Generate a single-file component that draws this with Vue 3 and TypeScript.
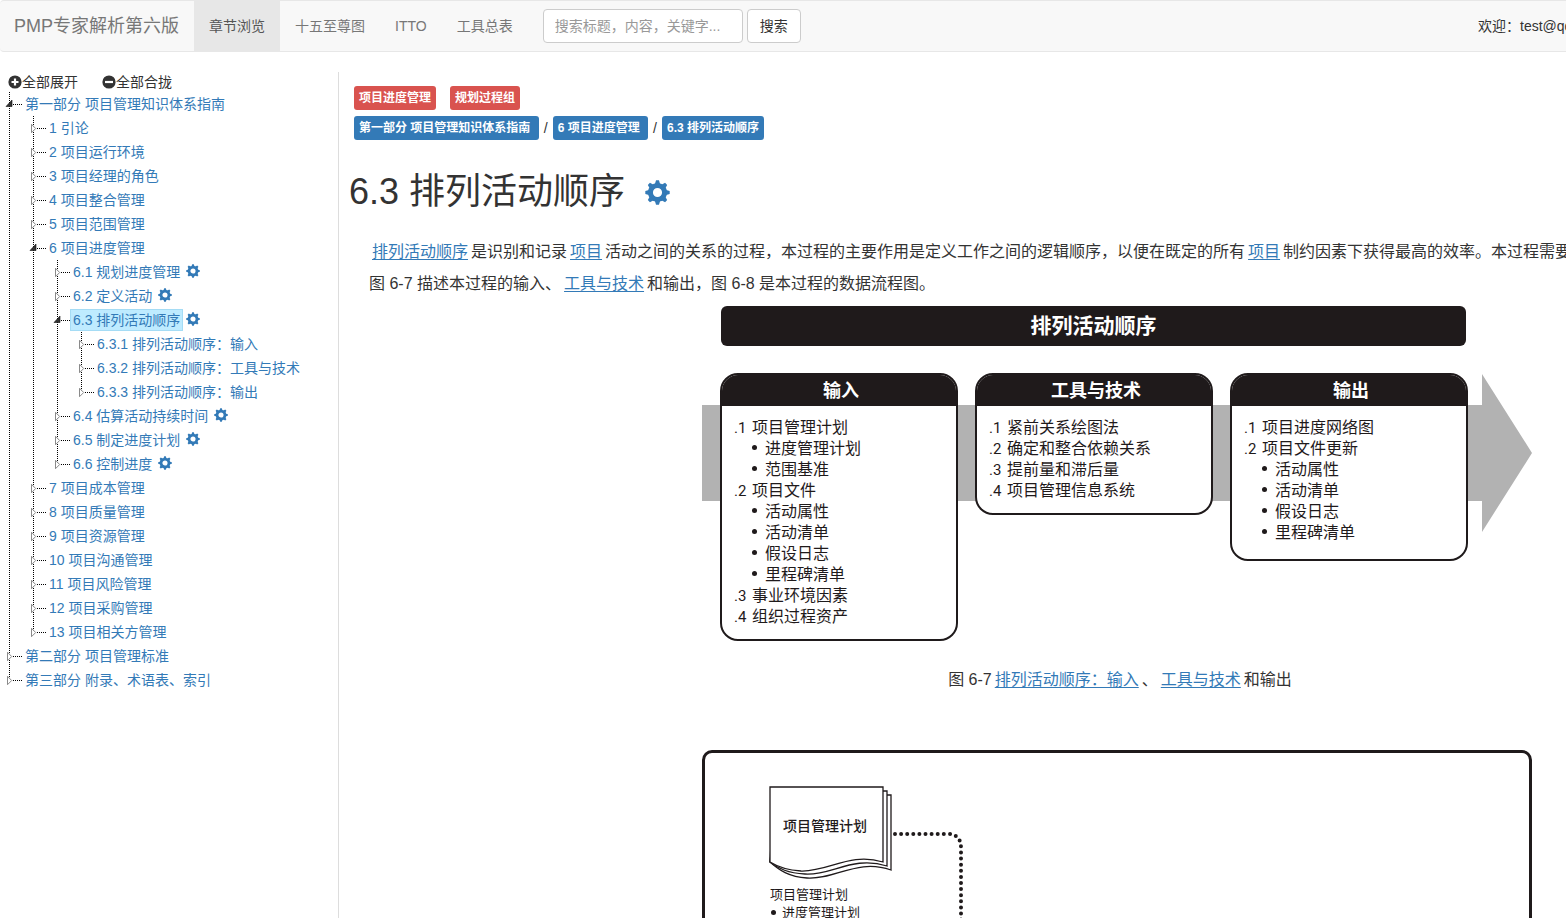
<script setup lang="ts">
import { defineComponent, h, ref, type PropType, type VNode } from 'vue'

interface TreeItem {
  title: string
  open?: boolean
  gear?: boolean
  children?: TreeItem[]
}

interface CardRow {
  no?: string
  text: string
}

interface Card {
  title: string
  tall?: boolean
  rows: CardRow[]
}

const GearIcon = defineComponent({
  setup() {
    return () =>
      h('svg', { class: 'gear', viewBox: '0 0 24 24', 'aria-hidden': 'true' }, [
        h('circle', { cx: 12, cy: 12, r: 6.8, fill: 'none', stroke: 'currentColor', 'stroke-width': 4.8 }),
        ...[0, 45, 90, 135, 180, 225, 270, 315].map((a) =>
          h('path', { d: 'M10.6 0.3h2.8l1.3 4.3h-5.4z', fill: 'currentColor', transform: `rotate(${a} 12 12)` })
        )
      ])
  }
})

const selected = ref('6.3 排列活动顺序')
const keyword = ref('')

const tree = ref<TreeItem[]>([
  {
    title: '第一部分 项目管理知识体系指南',
    open: true,
    children: [
      { title: '1 引论' },
      { title: '2 项目运行环境' },
      { title: '3 项目经理的角色' },
      { title: '4 项目整合管理' },
      { title: '5 项目范围管理' },
      {
        title: '6 项目进度管理',
        open: true,
        children: [
          { title: '6.1 规划进度管理', gear: true },
          { title: '6.2 定义活动', gear: true },
          {
            title: '6.3 排列活动顺序',
            gear: true,
            open: true,
            children: [
              { title: '6.3.1 排列活动顺序：输入' },
              { title: '6.3.2 排列活动顺序：工具与技术' },
              { title: '6.3.3 排列活动顺序：输出' }
            ]
          },
          { title: '6.4 估算活动持续时间', gear: true },
          { title: '6.5 制定进度计划', gear: true },
          { title: '6.6 控制进度', gear: true }
        ]
      },
      { title: '7 项目成本管理' },
      { title: '8 项目质量管理' },
      { title: '9 项目资源管理' },
      { title: '10 项目沟通管理' },
      { title: '11 项目风险管理' },
      { title: '12 项目采购管理' },
      { title: '13 项目相关方管理' }
    ]
  },
  { title: '第二部分 项目管理标准' },
  { title: '第三部分 附录、术语表、索引' }
])

function setAll(items: TreeItem[], open: boolean) {
  for (const item of items) {
    if (item.children) {
      item.open = open
      setAll(item.children, open)
    }
  }
}

const TreeList = defineComponent({
  props: { items: { type: Array as PropType<TreeItem[]>, required: true } },
  setup(props) {
    const render = (items: TreeItem[]): VNode =>
      h(
        'ul',
        { class: 'tree' },
        items.map((item) =>
          h('li', { key: item.title }, [
            h('div', { class: 'tree-row' }, [
              h(
                'button',
                {
                  type: 'button',
                  class: 'switch',
                  'aria-label': (item.open ? '收起 ' : '展开 ') + item.title,
                  onClick: () => (item.open = !item.open)
                },
                [
                  h('svg', { viewBox: '0 0 24 24', 'aria-hidden': 'true' }, [
                    item.open
                      ? h('path', { d: 'M12 8v6.5H6z', fill: '#333', stroke: '#111', 'stroke-width': 0.6 })
                      : h('path', { d: 'M7.5 8.3v8.4l4.2-4.2z', fill: '#fff', stroke: '#8a8a8a' }),
                    h('path', { d: 'M13 12.5h9', stroke: '#000', 'stroke-dasharray': '1 1' })
                  ])
                ]
              ),
              h(
                'a',
                {
                  href: '#',
                  class: ['node', { current: item.title === selected.value }],
                  onClick: (e: Event) => {
                    e.preventDefault()
                    selected.value = item.title
                  }
                },
                item.title
              ),
              item.gear ? h(GearIcon) : null
            ]),
            item.open && item.children ? render(item.children) : null
          ])
        )
      )
    return () => render(props.items)
  }
})

const cards: Card[] = [
  {
    title: '输入',
    rows: [
      { no: '.1', text: '项目管理计划' },
      { text: '进度管理计划' },
      { text: '范围基准' },
      { no: '.2', text: '项目文件' },
      { text: '活动属性' },
      { text: '活动清单' },
      { text: '假设日志' },
      { text: '里程碑清单' },
      { no: '.3', text: '事业环境因素' },
      { no: '.4', text: '组织过程资产' }
    ]
  },
  {
    title: '工具与技术',
    rows: [
      { no: '.1', text: '紧前关系绘图法' },
      { no: '.2', text: '确定和整合依赖关系' },
      { no: '.3', text: '提前量和滞后量' },
      { no: '.4', text: '项目管理信息系统' }
    ]
  },
  {
    title: '输出',
    tall: true,
    rows: [
      { no: '.1', text: '项目进度网络图' },
      { no: '.2', text: '项目文件更新' },
      { text: '活动属性' },
      { text: '活动清单' },
      { text: '假设日志' },
      { text: '里程碑清单' }
    ]
  }
]
</script>

<template>
  <div class="page">
    <header class="navbar">
      <a class="brand" href="#">PMP专家解析第六版</a>
      <nav class="menu">
        <a class="active" href="#">章节浏览</a>
        <a href="#">十五至尊图</a>
        <a href="#">ITTO</a>
        <a href="#">工具总表</a>
      </nav>
      <form class="search" @submit.prevent>
        <input v-model="keyword" type="text" aria-label="搜索" placeholder="搜索标题，内容，关键字..." />
        <button type="submit">搜索</button>
      </form>
      <span class="user">欢迎：test@qq.com</span>
    </header>

    <div class="body">
      <aside class="sidebar">
        <div class="tools">
          <button type="button" @click="setAll(tree, true)">
            <svg viewBox="0 0 14 14" aria-hidden="true">
              <circle cx="7" cy="7" r="6.6" fill="#333" />
              <path d="M7 3.5v7M3.5 7h7" stroke="#fff" stroke-width="2.2" />
            </svg>全部展开
          </button>
          <button type="button" @click="setAll(tree, false)">
            <svg viewBox="0 0 14 14" aria-hidden="true">
              <circle cx="7" cy="7" r="6.6" fill="#333" />
              <path d="M3 7h8" stroke="#fff" stroke-width="2.2" />
            </svg>全部合拢
          </button>
        </div>
        <TreeList :items="tree" />
      </aside>

      <main class="content">
        <div class="labels tags">
          <a class="label danger" href="#">项目进度管理</a>
          <a class="label danger" href="#">规划过程组</a>
        </div>
        <div class="labels">
          <a class="label primary" href="#">第一部分 项目管理知识体系指南&nbsp;</a>
          <span class="slash">/</span>
          <a class="label primary" href="#">6 项目进度管理&nbsp;</a>
          <span class="slash">/</span>
          <a class="label primary" href="#">6.3 排列活动顺序</a>
        </div>

        <h1>6.3 排列活动顺序 <GearIcon /></h1>

        <p class="text"><a href="#">排列活动顺序</a>是识别和记录<a href="#">项目</a>活动之间的关系的过程，本过程的主要作用是定义工作之间的逻辑顺序，以便在既定的所有<a href="#">项目</a>制约因素下获得最高的效率。本过程需要在整个项目期间开展。</p>
        <p class="text">图 6-7 描述本过程的输入、<a href="#">工具与技术</a>和输出，图 6-8 是本过程的数据流程图。</p>

        <figure>
          <div class="diagram">
            <div class="banner">排列活动顺序</div>
            <div class="process">
              <svg class="arrow" viewBox="0 0 830 160" aria-hidden="true">
                <path d="M0 32H780V1L830 80L780 159V128H0z" fill="#b2b2b2" />
              </svg>
              <section v-for="card in cards" :key="card.title" class="card" :class="{ tall: card.tall }">
                <h2>{{ card.title }}</h2>
                <ul>
                  <li v-for="row in card.rows" :key="row.text" :class="{ sub: !row.no }">
                    <span v-if="row.no" class="no">{{ row.no }}</span>
                    <span v-else class="dot"></span>
                    {{ row.text }}
                  </li>
                </ul>
              </section>
            </div>
          </div>
          <figcaption class="caption">图 6-7<a href="#">排列活动顺序：输入</a>、<a href="#">工具与技术</a>和输出</figcaption>
        </figure>

        <figure class="chart">
          <div class="flow">
            <div class="source">
              <svg class="sheet" viewBox="0 0 124 94" role="img" aria-label="项目管理计划">
                <g fill="#fff" stroke="#1f1a1b" stroke-width="1.3">
                  <path d="M9 9H122V84C88 72 66 94 38 92C20 91 10 84 1 76z" />
                  <path d="M5 5H118V80C84 69 62 90 36 88C19 87 10 83 1 76z" />
                  <path d="M1 1H114V76C80 66 60 86 32 85C17 84 9 81 1 76z" />
                </g>
                <text x="56" y="45" text-anchor="middle">项目管理计划</text>
              </svg>
              <div class="listing">
                <div>项目管理计划</div>
                <ul>
                  <li><span class="dot"></span>进度管理计划</li>
                </ul>
              </div>
            </div>
            <svg class="link-line" viewBox="0 0 80 400" aria-hidden="true">
              <path d="M3 3H56Q69 3 69 17V400" fill="none" stroke="#1f1a1b" stroke-width="4" stroke-linecap="round" stroke-dasharray="0 6.1" />
            </svg>
          </div>
        </figure>
      </main>
    </div>
  </div>
</template>

<style>
html,
body {
  margin: 0;
  background: #fff;
}

.gear {
  width: 14px;
  height: 14px;
  flex: none;
  color: #337ab7;
}

.tree {
  list-style: none;
  margin: 0;
  padding: 0;
}

.tree .tree {
  padding-left: 24px;
}

.tree li {
  background: repeating-linear-gradient(#000 0 1px, transparent 1px 2px) 9px 0 / 1px 100% no-repeat;
}

.tree li:last-child {
  background-size: 1px 12px;
}

.tree-row {
  display: flex;
  align-items: center;
  height: 24px;
  white-space: nowrap;
}

.tree-row .switch {
  flex: none;
  width: 22px;
  height: 24px;
  padding: 0;
  border: 0;
  background: none;
  overflow: hidden;
}

.tree-row .switch svg {
  display: block;
  width: 24px;
  height: 24px;
}

.tree-row .node {
  padding: 0 2px;
  border: 1px solid transparent;
  line-height: 20px;
  color: #337ab7;
  text-decoration: none;
}

.tree-row .node.current {
  background: #beebff;
  border-color: #a5dcf5;
}

.tree-row .gear {
  margin: 0 0 2px 3px;
}
</style>

<style scoped>
.page {
  height: 100vh;
  overflow: hidden;
  font-family: "Liberation Sans", "Noto Sans CJK SC", sans-serif;
  font-size: 14px;
  line-height: 20px;
  color: #333;
}

button,
input {
  font: inherit;
  color: inherit;
}

.navbar {
  display: flex;
  align-items: center;
  height: 50px;
  background: #f8f8f8;
  border: 1px solid #e7e7e7;
  border-width: 1px 0;
  border-radius: 4px 0 0 4px;
  white-space: nowrap;
}

.brand {
  padding: 15px 15px 15px 14px;
  font-size: 18px;
  color: #777;
  text-decoration: none;
}

.menu {
  display: flex;
}

.menu a {
  padding: 15px;
  color: #777;
  text-decoration: none;
}

.menu .active {
  background: #e7e7e7;
  color: #555;
}

.search {
  display: flex;
  gap: 4px;
  padding: 0 15px;
}

.search input {
  box-sizing: border-box;
  width: 200px;
  height: 34px;
  padding: 6px 11px;
  border: 1px solid #ccc;
  border-radius: 4px;
  background: #fff;
}

.search input::placeholder {
  color: #999;
  opacity: 1;
}

.search button {
  height: 34px;
  padding: 6px 12px;
  border: 1px solid #ccc;
  border-radius: 4px;
  background: #fff;
  line-height: 20px;
}

.user {
  flex: none;
  width: 88px;
  margin-left: auto;
  overflow: hidden;
}

.body {
  display: flex;
  min-width: 1901px;
  padding-top: 20px;
}

.sidebar {
  flex: none;
  width: 338px;
  min-height: calc(100vh - 72px);
  border-right: 1px solid #ddd;
}

.tools {
  display: flex;
  gap: 24px;
  padding-left: 8px;
}

.tools button {
  display: flex;
  align-items: center;
  height: 20px;
  padding: 0;
  border: 0;
  background: none;
}

.tools svg {
  width: 14px;
  height: 14px;
}

.content {
  flex: 1;
  padding: 14px 10px 0;
}

.labels {
  display: flex;
  padding-left: 5px;
  line-height: 24px;
}

.tags {
  gap: 14px;
  margin-bottom: 6px;
}

.label {
  padding: 0 5px;
  border-radius: 3px;
  font-size: 12px;
  font-weight: bold;
  color: #fff;
  text-decoration: none;
}

.danger {
  background: #d9534f;
}

.primary {
  background: #337ab7;
}

.slash {
  width: 14px;
  text-align: center;
}

h1 {
  display: flex;
  align-items: center;
  gap: 20px;
  margin: 32px 0 24px;
  font-size: 36px;
  line-height: 40px;
  font-weight: 400;
}

h1 .gear {
  width: 25px;
  height: 25px;
}

.text {
  margin: 0;
  padding-left: 20px;
  font-size: 16px;
  line-height: 32px;
  white-space: nowrap;
}

.text a,
.caption a {
  margin: 0 3px;
  color: #337ab7;
  text-decoration: underline;
  text-underline-offset: 2px;
}

figure {
  margin: 6px 0 0;
}

.diagram {
  width: 830px;
  margin: 0 auto;
  padding-right: 6px;
  font-family: "Noto Sans CJK SC", sans-serif;
  color: #1f1a1b;
}

.banner {
  width: 745px;
  margin-left: 19px;
  padding-bottom: 4px;
  border-radius: 6px;
  background: #1f1a1b;
  color: #fff;
  font-size: 21px;
  font-weight: bold;
  line-height: 36px;
  text-align: center;
}

.process {
  position: relative;
  display: flex;
  align-items: flex-start;
  gap: 17px;
  margin-top: 27px;
  padding-left: 18px;
}

.arrow {
  position: absolute;
  left: 0;
  top: 0;
  width: 830px;
  height: 160px;
}

.card {
  position: relative;
  box-sizing: border-box;
  width: 238px;
  padding-bottom: 13px;
  border: 2px solid #1f1a1b;
  border-radius: 18px;
  background: #fff;
  overflow: hidden;
}

.tall {
  padding-bottom: 17px;
}

.card h2 {
  margin: 0;
  padding: 0 0 2px 4px;
  background: #1f1a1b;
  color: #fff;
  font-size: 18px;
  line-height: 29px;
  text-align: center;
}

.card ul,
.listing ul {
  list-style: none;
  margin: 0;
  padding: 0;
}

.card ul {
  padding: 10px 0 0 12px;
}

.card li {
  display: flex;
  align-items: baseline;
  font-size: 16px;
  line-height: 21px;
}

.card .sub {
  padding-left: 18px;
}

.no {
  width: 18px;
  font-family: Roboto, sans-serif;
  font-size: 15px;
  line-height: 16px;
}

.dot {
  flex: none;
  align-self: center;
  width: 5px;
  height: 5px;
  border-radius: 50%;
  background: #1f1a1b;
}

.card .dot {
  margin-right: 8px;
}

.caption {
  margin-top: 23px;
  font-size: 16px;
  line-height: 32px;
  text-align: center;
}

.chart {
  margin-top: 54px;
  padding-right: 6px;
}

.flow {
  display: flex;
  box-sizing: border-box;
  width: 830px;
  min-height: 560px;
  margin: 0 auto;
  padding: 33px 64px;
  border: 3px solid #1f1a1b;
  border-radius: 10px;
  font-family: "Noto Sans CJK SC", sans-serif;
  color: #1f1a1b;
}

.source {
  width: 123px;
}

.sheet {
  display: block;
  width: 124px;
  height: 94px;
}

.sheet text {
  font-size: 14px;
  font-weight: 500;
  fill: #1f1a1b;
}

.listing {
  padding: 5px 0 0 1px;
  font-size: 13px;
  line-height: 18px;
}

.listing li {
  display: flex;
  align-items: center;
}

.listing .dot {
  margin: 0 6px 0 1px;
}

.link-line {
  width: 80px;
  height: 400px;
  margin-top: 45px;
}
</style>
